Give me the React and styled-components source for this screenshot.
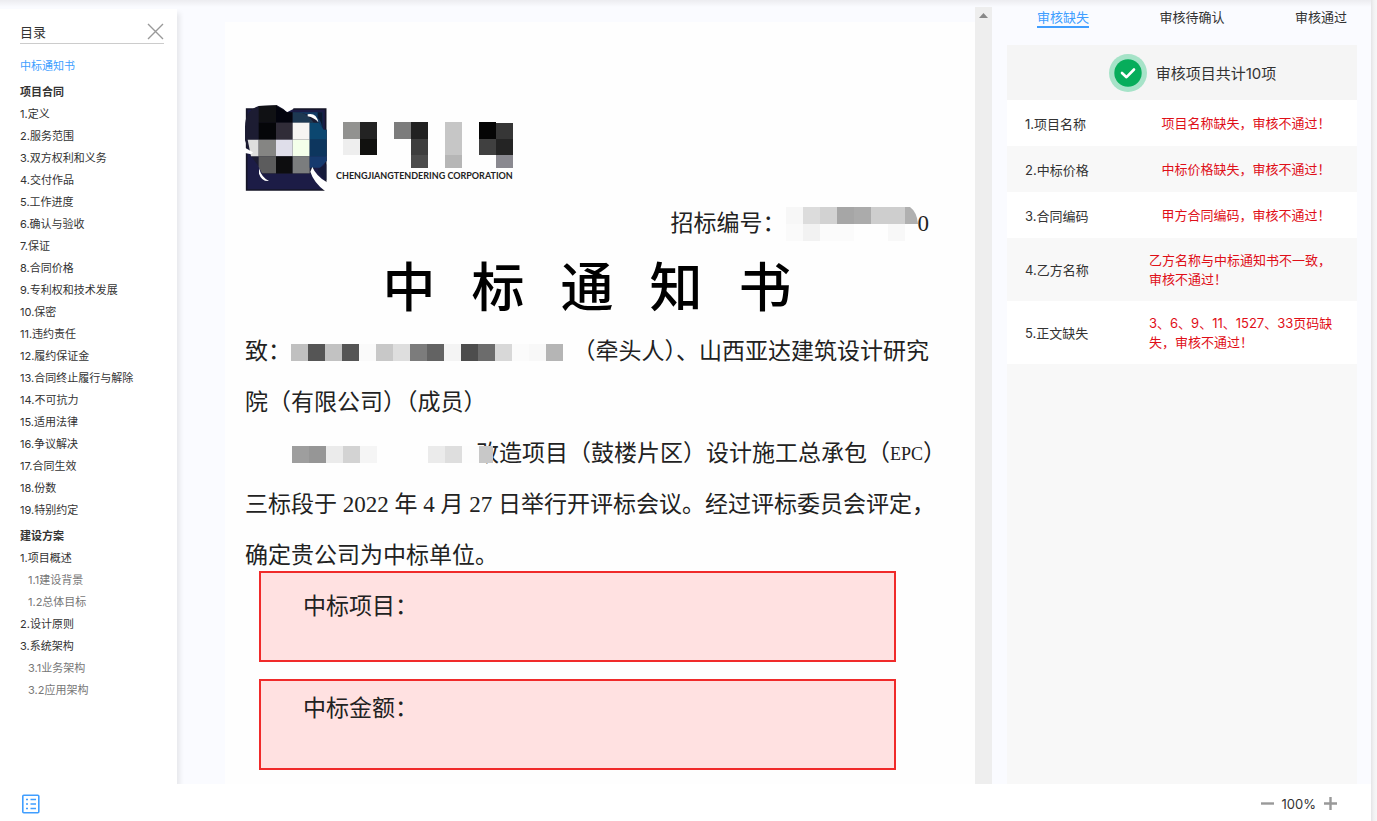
import React from "react";
import styled, { createGlobalStyle } from "styled-components";

const GlobalStyle = createGlobalStyle`
  * {
    box-sizing: border-box;
  }

  body {
    margin: 0;
    background: #fff;
    color: #333;
    font-family: 'Inter', 'Noto Sans CJK SC', sans-serif;
    font-size: 13px;
  }

  button {
    padding: 0;
    border: 0;
    background: none;
    color: inherit;
    font: inherit;
    cursor: pointer;
  }

  svg {
    display: block;
    flex-shrink: 0;
  }
`;

const Page = styled.div`
  display: flex;
  height: 100vh;
  overflow: hidden;
`;

const Frame = styled.div`
  flex: 1;
  min-width: 0;
  display: flex;
  flex-direction: column;
`;

const Edge = styled.div`
  width: 6px;
  background: linear-gradient(to right, #e4e4e6, #f2f2f3 3px, #f7f7f7);
`;

const Workspace = styled.main`
  flex: 1;
  min-height: 0;
  display: flex;
  padding-right: 14px;
  background: linear-gradient(#ececf0, #fafbff 7px);
`;

const Sidebar = styled.nav`
  width: 177px;
  margin-top: 9px;
  padding: 11px 13px 0 20px;
  background: #fff;
  box-shadow: 3px 4px 5px rgba(0, 0, 0, 0.08);
`;

const SidebarHeader = styled.div`
  display: flex;
  align-items: center;
  justify-content: space-between;
  height: 24px;
  margin-bottom: 10px;
  border-bottom: 1px solid #ccc;
`;

const SidebarTitle = styled.h2`
  margin: 0;
  font-size: 13px;
  font-weight: 400;
`;

const Outline = styled.ul`
  margin: 0 0 4px;
  padding: 0;
  list-style: none;
`;

const OutlineItem = styled.li`
  height: 22px;
  padding-left: ${(props) => (props.$nested ? 8 : 0)}px;
  line-height: 22px;
`;

const OutlineLink = styled.a`
  color: ${(props) => (props.$active ? "#409eff" : props.$nested ? "#777" : "#333")};
  font-size: 11px;
  font-weight: ${(props) => (props.$strong ? 600 : 400)};
  text-decoration: none;
  white-space: nowrap;
`;

const Viewer = styled.section`
  flex: 1;
  min-width: 0;
  display: flex;
  padding: 7px 15px 0 48px;
`;

const Paper = styled.article`
  flex: 1;
  min-width: 0;
  margin-top: 15px;
  padding: 83px 46px 0 20px;
  overflow: hidden;
  background: #fefefe;
  color: #222;
  font-family: 'Liberation Serif', 'Noto Sans CJK SC', serif;
  font-size: 23px;
`;

const Scrollbar = styled.div`
  width: 17px;
  padding: 5px 4px;
  background: #eee;
`;

const Letterhead = styled.header`
  display: flex;
  gap: 9px;
`;

const Company = styled.div`
  padding-top: 17px;
`;

const CompanyName = styled.div`
  font-family: 'Lato', sans-serif;
  font-size: 9px;
  font-weight: 700;
  line-height: 16px;
`;

const TenderNumber = styled.div`
  display: flex;
  align-items: center;
  justify-content: flex-end;
  height: 36px;
  margin-top: 15px;
  line-height: 24px;
  white-space: nowrap;
`;

const NoticeTitle = styled.h1`
  display: flex;
  justify-content: center;
  gap: 36px;
  margin: 15px 0 19px;
  font-size: 53px;
  font-weight: 500;
  line-height: 64px;
  color: #000;
`;

const Lines = styled.div`
  display: flex;
  flex-direction: column;
  gap: 27px;
`;

const Line = styled.p`
  display: flex;
  align-items: center;
  height: 24px;
  margin: 0;
  padding-left: ${(props) => (props.$indent ? 47 : 0)}px;
  line-height: 24px;
  white-space: nowrap;
`;

const Abbr = styled.span`
  font-size: 18px;
`;

const Cover = styled.span`
  position: relative;
  z-index: 1;
  margin-right: -17px;
`;

const Highlight = styled.div`
  height: 91px;
  margin: ${(props) => (props.$first ? 3 : 17)}px 33px 0 14px;
  padding: ${(props) => (props.$first ? 20 : 14)}px 42px;
  border: 2px solid #f02a2a;
  background: #ffe1e1;
  line-height: 28px;
`;

const Review = styled.aside`
  width: 350px;
  display: flex;
  flex-direction: column;
`;

const Tabs = styled.div`
  display: flex;
  align-items: flex-start;
  justify-content: space-between;
  height: 45px;
  padding: 6px 10px 0 30px;
`;

const Tab = styled.button`
  height: 22px;
  border-bottom: 2px solid ${(props) => (props.$active ? "#409eff" : "transparent")};
  color: ${(props) => (props.$active ? "#409eff" : "#333")};
  line-height: 22px;
`;

const Summary = styled.div`
  display: flex;
  align-items: center;
  justify-content: center;
  gap: 9px;
  height: 55px;
  padding-left: 21px;
  background: #f5f5f5;
  font-size: 15px;
`;

const Results = styled.div`
  flex: 1;
  background: #f8f8f8;
`;

const ResultTable = styled.table`
  width: 100%;
  border-collapse: collapse;
  line-height: 19px;
`;

const ResultRow = styled.tr`
  height: 46px;
  background: #fff;

  &:nth-child(even) {
    background: #f8f8f8;
  }
`;

const ResultName = styled.th`
  padding: 2px 0 0 18px;
  font-weight: 400;
  text-align: left;
`;

const ResultCell = styled.td`
  width: 208px;
  padding: 13px 14px 12px 0;
  color: #df0f18;
`;

const Message = styled.div`
  width: fit-content;
  margin: 0 auto;
`;

const Footer = styled.footer`
  display: flex;
  align-items: center;
  justify-content: space-between;
  height: 37px;
  padding: 2px 34px 0 21px;
  background: #fff;
`;

const Zoom = styled.div`
  display: flex;
  align-items: center;
  gap: 8px;
`;

const CELL = 17;

const Mosaic = ({ rows, width = rows[0].length * CELL }) => (
  <svg width={width} height={rows.length * CELL} shapeRendering="crispEdges" aria-hidden="true">
    {rows.map((row, y) =>
      row.map((shade, x) => (
        <rect key={`${x}-${y}`} x={x * CELL} y={y * CELL} width={CELL} height={CELL} fill={`#${shade.repeat(3)}`} />
      ))
    )}
  </svg>
);

const Emblem = () => (
  <svg width="82" height="86" viewBox="44 44 246 258" aria-hidden="true">
    <path d="M49 56H286V299H49Z" fill="#1c1c46" stroke="#141426" strokeWidth="5" />
    <path d="M186 66H278V130Q250 70 190 78Z" fill="#123b66" />
    <path d="M262 66L277 66V120Q274 92 262 82Z" fill="#0b1830" />
    <path d="M136 42H189V56L170 66Z" fill="#fff" />
    <path d="M44 110Q44 60 85 47L140 45Q160 55 170 66L215 68Q250 75 266 98L280 118H289V212H270L240 250H100Q80 220 60 195L44 150Z" fill="#1c1c32" />
    <path d="M85 47L140 45L137 97H85Z" fill="#101114" />
    <path d="M137 46Q155 55 170 66H187V97H137Z" fill="#03040e" />
    <path d="M187 66L215 68Q235 74 250 97H187Z" fill="#1d3852" />
    <path d="M85 97H137V148H85Z" fill="#050609" />
    <path d="M137 97H187V148H137Z" fill="#302c38" />
    <path d="M187 97H238V148H187Z" fill="#f6f4f2" />
    <path d="M238 97H266L280 118H289V148H238Z" fill="#0c4770" />
    <path d="M232 72Q258 66 264 96Q252 82 232 78Z" fill="#fff" />
    <path d="M52 148H85V198H62Z" fill="#dedede" />
    <path d="M85 148H137V198H85Z" fill="#858583" />
    <path d="M137 148H187V198H137Z" fill="#dfdeea" />
    <path d="M187 148H238V198H187Z" fill="#f4ffea" />
    <path d="M238 148H289V198H238Z" fill="#0d365e" />
    <path d="M85 198H137V249H95L85 230Z" fill="#5c5c5d" />
    <path d="M137 198H187V249H137Z" fill="#0d0d0f" />
    <path d="M187 198H238V249H187Z" fill="#7b7d7e" />
    <path d="M238 198H289V212L270 232H238Z" fill="#163a6e" />
    <path d="M44 172L68 186L62 192L44 188Z" fill="#fff" />
    <path d="M86 234Q94 262 116 272Q94 274 86 250Z" fill="#fff" />
    <path d="M246 230Q258 258 290 276V302H284Q250 276 240 244Z" fill="#fff" />
    <path d="M262 236L288 222V270Q268 256 262 236Z" fill="#151a3a" />
  </svg>
);

const CompanyMark = () => (
  <svg width="180" height="46" viewBox="318 98 540 138" shapeRendering="crispEdges" aria-hidden="true">
    <path d="M340 98H391V148H340Z" fill="#929290" />
    <path d="M391 98H442V148H391Z" fill="#232323" />
    <path d="M340 148H391V198H340Z" fill="#eee" />
    <path d="M391 148H442V198H391Z" fill="#11110f" />
    <path d="M493 98H544V148H493Z" fill="#7c7c7c" />
    <path d="M544 98H595V148H544Z" fill="#212121" />
    <path d="M544 148H595V198H544Z" fill="#3e3e3e" />
    <path d="M544 198H595V236H544Z" fill="#4c4c4c" />
    <path d="M646 98H697V198H646Z" fill="#c6c6c6" />
    <path d="M646 198H697V236H646Z" fill="#b6b6b6" />
    <path d="M748 98H799V148H748Z" fill="#050505" />
    <path d="M799 101H850V148H799Z" fill="#363636" />
    <path d="M748 148H799V198H748Z" fill="#404040" />
    <path d="M799 148H850V198H799Z" fill="#242424" />
    <path d="M799 198H850V236H799Z" fill="#8a8990" />
  </svg>
);

const NumberMosaic = () => (
  <svg width="132" height="34" aria-hidden="true">
    <path d="M0 0H17V17H0Z" fill="#f7f7f7" />
    <path d="M17 0H34V17H17Z" fill="#dcdcdc" />
    <path d="M34 0H51V17H34Z" fill="#d2d2d2" />
    <path d="M51 0H68V17H51Z" fill="#a6a6a6" />
    <path d="M68 0H85V17H68Z" fill="#ababab" />
    <path d="M85 0H119V17H85Z" fill="#cecece" />
    <path d="M119 0H124Q131 5 132 17H119Z" fill="#b0b0b0" />
    <path d="M0 17H17V34H0Z" fill="#fafafa" />
    <path d="M17 17H34V34H17Z" fill="#f2f2f2" />
    <path d="M34 17H68V34H34Z" fill="#fbfbfb" />
    <path d="M102 17H119V34H102Z" fill="#f8f8f8" />
  </svg>
);

const CloseIcon = () => (
  <svg width="17" height="17" viewBox="0 0 17 17" stroke="#999" strokeWidth="1.4" aria-hidden="true">
    <path d="M1 1L16 16M16 1L1 16" />
  </svg>
);

const CheckIcon = () => (
  <svg width="38" height="38" viewBox="0 0 38 38" aria-hidden="true">
    <circle cx="19" cy="19" r="19" fill="#a6e3c8" />
    <circle cx="19" cy="19" r="13.7" fill="#07ad5b" />
    <path d="M13 19L17.5 23.2L25 15.5" fill="none" stroke="#fff" strokeWidth="2.6" strokeLinecap="round" strokeLinejoin="round" />
  </svg>
);

const ListIcon = () => (
  <svg width="19" height="20" viewBox="0 0 19 20" fill="none" stroke="#409eff" aria-hidden="true">
    <rect x="1.8" y="1.2" width="16" height="17.6" rx="1" strokeWidth="1.6" />
    <path d="M5 5.5H7M9.5 5.5H15M5 10H7M9.5 10H15M5 14.5H7M9.5 14.5H15" strokeWidth="1.5" />
  </svg>
);

const MinusIcon = () => (
  <svg width="13" height="13" stroke="#999" strokeWidth="2.4" aria-hidden="true">
    <path d="M0 6.5H13" />
  </svg>
);

const PlusIcon = () => (
  <svg width="13" height="13" stroke="#999" strokeWidth="2.4" aria-hidden="true">
    <path d="M0 6.5H13M6.5 0V13" />
  </svg>
);

const outline = [
  [{ text: "中标通知书", active: true }],
  [
    { text: "项目合同", strong: true },
    { text: "1.定义" },
    { text: "2.服务范围" },
    { text: "3.双方权利和义务" },
    { text: "4.交付作品" },
    { text: "5.工作进度" },
    { text: "6.确认与验收" },
    { text: "7.保证" },
    { text: "8.合同价格" },
    { text: "9.专利权和技术发展" },
    { text: "10.保密" },
    { text: "11.违约责任" },
    { text: "12.履约保证金" },
    { text: "13.合同终止履行与解除" },
    { text: "14.不可抗力" },
    { text: "15.适用法律" },
    { text: "16.争议解决" },
    { text: "17.合同生效" },
    { text: "18.份数" },
    { text: "19.特别约定" },
  ],
  [
    { text: "建设方案", strong: true },
    { text: "1.项目概述" },
    { text: "1.1建设背景", nested: true },
    { text: "1.2总体目标", nested: true },
    { text: "2.设计原则" },
    { text: "3.系统架构" },
    { text: "3.1业务架构", nested: true },
    { text: "3.2应用架构", nested: true },
  ],
];

const results = [
  ["1.项目名称", "项目名称缺失，审核不通过！"],
  ["2.中标价格", "中标价格缺失，审核不通过！"],
  ["3.合同编码", "甲方合同编码，审核不通过！"],
  ["4.乙方名称", "乙方名称与中标通知书不一致，审核不通过！"],
  ["5.正文缺失", "3、6、9、11、1527、33页码缺失，审核不通过！"],
];

const leadMosaic = [["c0", "55", "c2", "55", "fa", "c8", "de", "7c", "63", "f4", "4d", "6c", "d8", "fb", "f8", "b5"]];
const projectMosaic = [["9e", "96", "eb", "d3", "f5", "fe", "fe", "fe", "eb", "de", "fd", "c8"]];

const Gap = styled.span`
  width: 12px;
`;

export default () => (
  <Page>
    <GlobalStyle />
    <Frame>
      <Workspace>
        <Sidebar>
          <SidebarHeader>
            <SidebarTitle>目录</SidebarTitle>
            <button type="button" aria-label="关闭">
              <CloseIcon />
            </button>
          </SidebarHeader>
          {outline.map((group) => (
            <Outline key={group[0].text}>
              {group.map(({ text, active, strong, nested }) => (
                <OutlineItem key={text} $nested={nested}>
                  <OutlineLink href="#" $active={active} $strong={strong} $nested={nested}>
                    {text}
                  </OutlineLink>
                </OutlineItem>
              ))}
            </Outline>
          ))}
        </Sidebar>

        <Viewer>
          <Paper>
            <Letterhead>
              <Emblem />
              <Company>
                <CompanyMark />
                <CompanyName>CHENGJIANGTENDERING CORPORATION</CompanyName>
              </Company>
            </Letterhead>
            <TenderNumber>
              招标编号：
              <NumberMosaic />0
            </TenderNumber>
            <NoticeTitle>
              {[..."中标通知书"].map((char) => (
                <span key={char}>{char}</span>
              ))}
            </NoticeTitle>
            <Lines>
              <Line>
                致：
                <Mosaic rows={leadMosaic} />
                <Gap />
                （牵头人）、山西亚达建筑设计研究
              </Line>
              <Line>院（有限公司）（成员）</Line>
              <Line $indent>
                <Cover>
                  <Mosaic rows={projectMosaic} width={201} />
                </Cover>
                改造项目（鼓楼片区）设计施工总承包（<Abbr>EPC</Abbr>）
              </Line>
              <Line>三标段于 2022 年 4 月 27 日举行开评标会议。经过评标委员会评定，</Line>
              <Line>确定贵公司为中标单位。</Line>
            </Lines>
            <Highlight $first>中标项目：</Highlight>
            <Highlight>中标金额：</Highlight>
          </Paper>
          <Scrollbar>
            <svg width="9" height="6" aria-hidden="true">
              <path d="M0 6L4.5 1L9 6Z" fill="#888" />
            </svg>
          </Scrollbar>
        </Viewer>

        <Review>
          <Tabs>
            <Tab type="button" $active>审核缺失</Tab>
            <Tab type="button">审核待确认</Tab>
            <Tab type="button">审核通过</Tab>
          </Tabs>
          <Summary>
            <CheckIcon />
            审核项目共计10项
          </Summary>
          <Results>
            <ResultTable>
              <tbody>
                {results.map(([name, message]) => (
                  <ResultRow key={name}>
                    <ResultName scope="row">{name}</ResultName>
                    <ResultCell>
                      <Message>{message}</Message>
                    </ResultCell>
                  </ResultRow>
                ))}
              </tbody>
            </ResultTable>
          </Results>
        </Review>
      </Workspace>

      <Footer>
        <button type="button" aria-label="目录">
          <ListIcon />
        </button>
        <Zoom>
          <button type="button" aria-label="缩小">
            <MinusIcon />
          </button>
          100%
          <button type="button" aria-label="放大">
            <PlusIcon />
          </button>
        </Zoom>
      </Footer>
    </Frame>
    <Edge />
  </Page>
);
